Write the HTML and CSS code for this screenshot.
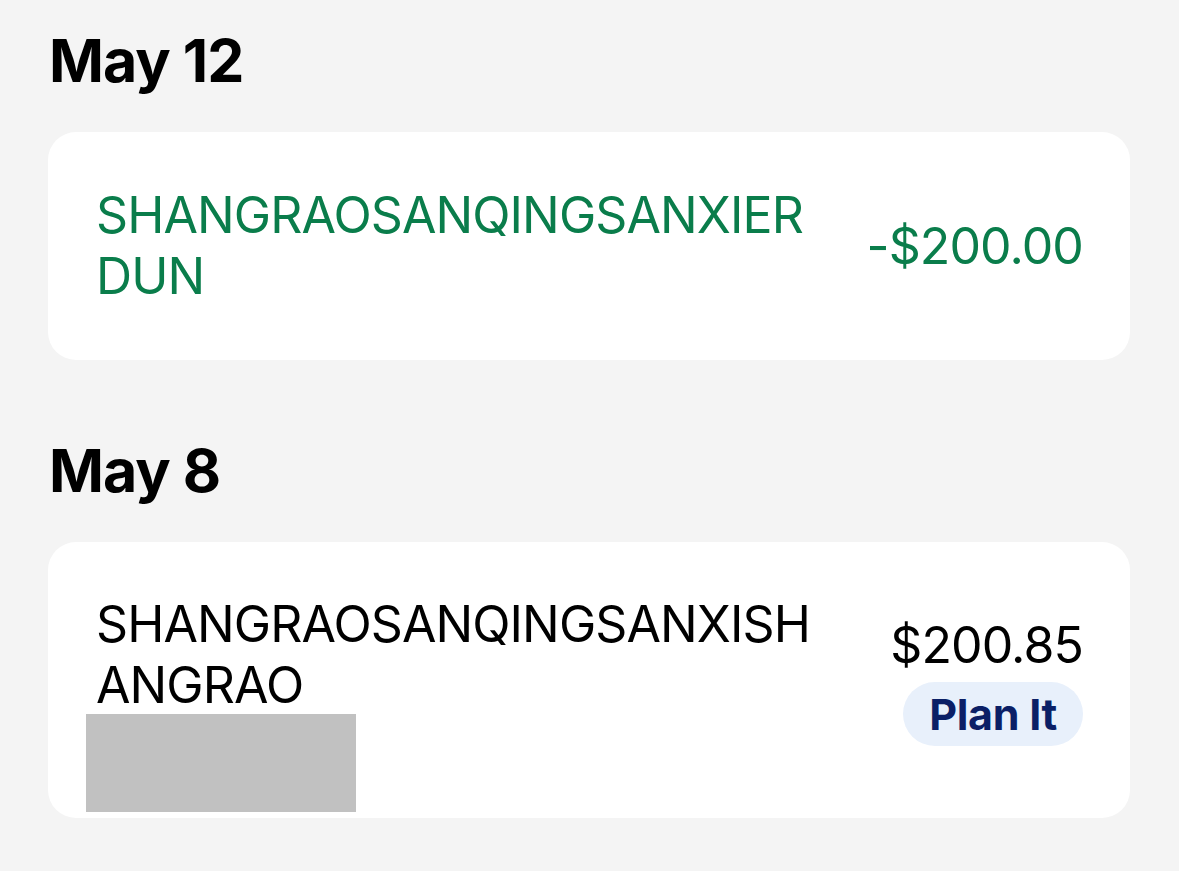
FILE: index.html
```html
<!DOCTYPE html>
<html lang="en">
<head>
<meta charset="utf-8">
<title>Transactions</title>
<link rel="stylesheet" href="styles.css">
</head>
<body>
<main class="list">
  <section class="group">
    <h2 class="date">May 12</h2>
    <div class="card card-credit">
      <div class="name credit">SHANGRAOSANQINGSANXIERDUN</div>
      <div class="right">
        <div class="amount credit">-$200.00</div>
      </div>
    </div>
  </section>
  <section class="group">
    <h2 class="date">May 8</h2>
    <div class="card card-debit">
      <div class="left">
        <div class="name">SHANGRAOSANQINGSANXISHANGRAO</div>
        <div class="redacted"></div>
      </div>
      <div class="right">
        <div class="amount">$200.85</div>
        <button class="plan">Plan It</button>
      </div>
    </div>
  </section>
</main>
</body>
</html>
```
FILE: styles.css
```css
html, body {
  margin: 0;
  padding: 0;
  background: #f4f4f4;
}
body {
  font-family: Inter, "Noto Sans", "Liberation Sans", sans-serif;
  color: #000;
}
.list {
  display: flex;
  flex-direction: column;
  padding: 31px 49px 0 48px;
  gap: 81px;
}
.group {
  display: flex;
  flex-direction: column;
  gap: 42px;
}
.date {
  margin: 0 0 0 1px;
  font-size: 59px;
  line-height: 59px;
  font-weight: 700;
  letter-spacing: -1px;
}
.card {
  background: #fff;
  border-radius: 28px;
  display: flex;
  justify-content: space-between;
  align-items: center;
  padding: 53px 47px 53px 48px;
}
.card-debit {
  padding: 52px 47px 6px 48px;
}
.name {
  width: 720px;
  font-size: 50px;
  line-height: 61px;
  word-break: break-all;
  letter-spacing: -0.9px;
}
.credit {
  color: #0a7d4b;
}
.left {
  display: flex;
  flex-direction: column;
}
.redacted {
  width: 270px;
  height: 98px;
  background: #c1c1c1;
  margin: -2px 0 0 -10px;
}
.right {
  display: flex;
  flex-direction: column;
  align-items: flex-end;
  gap: 6px;
}
.card-debit .right {
  align-self: center;
  margin-top: -46px;
}
.amount {
  font-size: 50px;
  line-height: 61px;
  letter-spacing: -0.9px;
}
.plan {
  font-family: inherit;
  border: none;
  background: #e8f0fb;
  color: #0b1f66;
  font-size: 43px;
  font-weight: 700;
  letter-spacing: -0.3px;
  height: 64px;
  padding: 0 26px;
  border-radius: 32px;
}
```
